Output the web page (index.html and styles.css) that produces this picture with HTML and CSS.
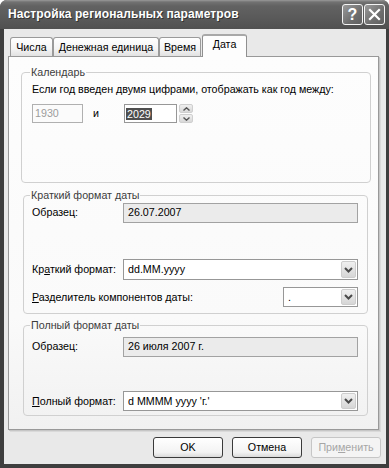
FILE: index.html
```html
<!DOCTYPE html>
<html lang="ru">
<head>
<meta charset="utf-8">
<title>Настройка региональных параметров</title>
<link rel="stylesheet" href="styles.css">
</head>
<body>
<div class="window">
  <div class="titlebar">
    <span class="title">Настройка региональных параметров</span>
    <div class="tb-buttons">
      <span class="tb-btn help">?</span>
      <span class="tb-btn close"><svg width="13" height="13" viewBox="0 0 13 13"><path d="M2 2 L11 11 M11 2 L2 11" stroke="#fff" stroke-width="2.2" stroke-linecap="square"/></svg></span>
    </div>
  </div>
  <div class="client">
    <div class="tabs">
      <div class="tab t1">Числа</div>
      <div class="tab t2">Денежная единица</div>
      <div class="tab t3">Время</div>
      <div class="tab t4 active">Дата</div>
    </div>
    <div class="panel">
      <fieldset class="group cal">
        <legend>Календарь</legend>
        <div class="intro">Если год введен двумя цифрами, отображать как год между:</div>
        <div class="years">
          <div class="edit y1 disabled">1930</div>
          <span class="and">и</span>
          <div class="edit y2"><span class="sel">2029</span></div>
          <div class="spin">
            <span class="spin-half"><svg width="7" height="4" viewBox="0 0 7 4"><path d="M0.5 3.5 L3.5 0.8 L6.5 3.5" fill="none" stroke="#555" stroke-width="1.4"/></svg></span>
            <span class="spin-half"><svg width="7" height="4" viewBox="0 0 7 4"><path d="M0.5 0.5 L3.5 3.2 L6.5 0.5" fill="none" stroke="#555" stroke-width="1.4"/></svg></span>
          </div>
        </div>
      </fieldset>

      <fieldset class="group short">
        <legend>Краткий формат даты</legend>
        <div class="row sample-row">
          <span class="label">Образец:</span>
          <div class="sample">26.07.2007</div>
        </div>
        <div class="row combo-row first">
          <span class="label">Кр<u>а</u>ткий формат:</span>
          <div class="combo wide"><span class="combo-text">dd.MM.yyyy</span><span class="drop"><svg width="9" height="6" viewBox="0 0 9 6"><path d="M1 1 L4.5 4.5 L8 1" fill="none" stroke="#4a4a4a" stroke-width="2"/></svg></span></div>
        </div>
        <div class="row combo-row sep">
          <span class="label"><u>Р</u>азделитель компонентов даты:</span>
          <div class="combo narrow"><span class="combo-text">.</span><span class="drop"><svg width="9" height="6" viewBox="0 0 9 6"><path d="M1 1 L4.5 4.5 L8 1" fill="none" stroke="#4a4a4a" stroke-width="2"/></svg></span></div>
        </div>
      </fieldset>

      <fieldset class="group full">
        <legend>Полный формат даты</legend>
        <div class="row sample-row">
          <span class="label">Образец:</span>
          <div class="sample">26 июля 2007 г.</div>
        </div>
        <div class="row combo-row first2">
          <span class="label"><u>П</u>олный формат:</span>
          <div class="combo wide"><span class="combo-text">d MMMM yyyy 'г.'</span><span class="drop"><svg width="9" height="6" viewBox="0 0 9 6"><path d="M1 1 L4.5 4.5 L8 1" fill="none" stroke="#4a4a4a" stroke-width="2"/></svg></span></div>
        </div>
      </fieldset>
    </div>
    <div class="buttons">
      <div class="btn">OK</div>
      <div class="btn">Отмена</div>
      <div class="btn disabled">При<u>м</u>енить</div>
    </div>
  </div>
</div>
</body>
</html>
```

FILE: styles.css
```css
* { box-sizing: border-box; }
html, body { margin: 0; padding: 0; background: #fff; }
body {
  width: 389px;
  height: 468px;
  overflow: hidden;
  font-family: "Liberation Sans", Arial, sans-serif;
  font-size: 10.7px;
  line-height: 13px;
  color: #000;
}
.window {
  width: 389px;
  height: 468px;
  display: flex;
  flex-direction: column;
  background: #3e3e3e;
  border-radius: 7px 7px 0 0;
  overflow: hidden;
}
.titlebar {
  height: 29px;
  flex: none;
  display: flex;
  align-items: center;
  padding: 0 4px 0 8px;
  background: linear-gradient(#9a9a9a 0, #727272 2px, #626262 6px, #5a5a5a 60%, #505050 100%);
}
.title {
  color: #fff;
  font-weight: bold;
  font-size: 12px;
  letter-spacing: 0.1px;
  text-shadow: 1px 1px 0 #333;
}
.tb-buttons {
  margin-left: auto;
  display: flex;
  gap: 1px;
}
.tb-btn {
  width: 21px;
  height: 21px;
  border: 1px solid #f4f4f4;
  border-radius: 3px;
  background: linear-gradient(135deg, #9a9a9a, #6e6e6e 60%, #606060);
  color: #fff;
  display: flex;
  align-items: center;
  justify-content: center;
  font-weight: bold;
  font-size: 16px;
}
.client {
  flex: 1;
  margin: 0 3px 4px 4px;
  background: #e9e9e9;
  padding: 5px 7px 0 4px;
  display: flex;
  flex-direction: column;
}
.tabs {
  height: 22px;
  display: flex;
  align-items: flex-end;
  padding-left: 2px;
}
.tab {
  height: 19px;
  border: 1px solid #9a9a9a;
  border-bottom: 0;
  border-radius: 3px 3px 0 0;
  background: linear-gradient(#ffffff, #f4f4f4 60%, #e2e2e2);
  padding-top: 3px;
  text-align: center;
}
.t1 { width: 43px; }
.t2 { width: 106px; }
.t3 { width: 42px; margin-right: 1px; }
.t4 { width: 45px; }
.tab.active {
  height: 23px;
  margin-bottom: -1px;
  position: relative;
  z-index: 1;
  background: #fdfdfd;
  border-color: #8f8f8f;
  border-top: 2px solid #a8a8a8;
  padding-top: 2px;
}
.panel {
  height: 374px;
  border: 1px solid #999;
  background: linear-gradient(#fdfdfd, #fafafa 70%, #f1f1f1);
  box-shadow: 1px 1px 0 #c6c6c6, 2px 2px 0 #d9d9d9;
  padding-top: 9px;
}
.group {
  margin: 0;
  border: 1px solid #d0d0d0;
  border-radius: 4px;
  min-width: 0;
}
.group legend {
  height: 13px;
  line-height: 13px;
  padding: 0 1px;
  margin-left: -2px;
  color: #3c3c3c;
}
.cal {
  margin: 0 7px 0 12px;
  height: 117px;
  padding: 0 9px 0 10px;
}
.intro { margin-top: 4px; }
.years {
  margin-top: 8px;
  display: flex;
  align-items: center;
}
.edit {
  height: 19px;
  border: 1px solid #979797;
  background: #fff;
  padding: 0 2px;
  line-height: 17px;
}
.edit.y1 { width: 51px; color: #9c9c9c; background: #fbfbfb; border-color: #b0b0b0; }
.and { width: 41px; padding-left: 10px; }
.edit.y2 { width: 53px; padding-left: 1px; display: flex; align-items: center; }
.sel {
  background: #4e4e4e;
  color: #fff;
  line-height: 12px;
  padding: 0 1px;
}
.spin {
  width: 14px;
  height: 19px;
  margin-left: 2px;
  display: flex;
  flex-direction: column;
  gap: 1px;
}
.spin-half {
  flex: 1;
  background: linear-gradient(#efefef, #d8d8d8);
  border: 1px solid #cfcfcf;
  border-radius: 2px;
  display: flex;
  align-items: center;
  justify-content: center;
}
.short {
  margin: 6px 10px 0 14px;
  height: 125px;
  padding: 0 9px 0 8px;
}
.full {
  margin: 5px 10px 0 14px;
  height: 97px;
  padding: 0 9px 0 8px;
}
.row { display: flex; }
.sample-row { align-items: flex-start; }
.short .sample-row { margin-top: 1px; }
.full .sample-row { margin-top: 5px; }
.label { width: 91px; flex: none; }
.sample-row .label { padding-top: 3px; }
.sample {
  flex: 1;
  height: 20px;
  border: 1px solid #a2a2a2;
  background: #ebebeb;
  padding: 2px 4px 0;
}
.combo-row { align-items: center; }
.combo-row.first { margin-top: 36px; }
.combo-row.sep { margin-top: 7px; }
.combo-row.first2 { margin-top: 34px; }
.combo-row.sep .label { width: auto; }
.combo {
  height: 21px;
  border: 1px solid #979797;
  background: #fff;
  display: flex;
  align-items: center;
  padding: 1px;
}
.combo-row.sep .combo, .full .combo { height: 20px; }
.combo.wide { flex: 1; }
.combo.narrow { width: 75px; margin-left: auto; }
.combo-text { flex: 1; padding-left: 3px; }
.drop {
  width: 15px;
  height: 100%;
  background: linear-gradient(#f0f0f0, #d6d6d6);
  border: 1px solid #cdcdcd;
  border-radius: 2px;
  display: flex;
  align-items: center;
  justify-content: center;
}
.buttons {
  margin-top: 7px;
  margin-right: -2px;
  display: flex;
  justify-content: flex-end;
  gap: 9px;
}
.btn {
  width: 70px;
  height: 21px;
  border: 1px solid #3a3a3a;
  border-radius: 3px;
  background: linear-gradient(#ffffff, #f3f3f3 75%, #dadada);
  text-align: center;
  line-height: 19px;
}
.btn.disabled {
  border-color: #c6c6c6;
  color: #a6a6a6;
  background: #f4f4f4;
}
```
